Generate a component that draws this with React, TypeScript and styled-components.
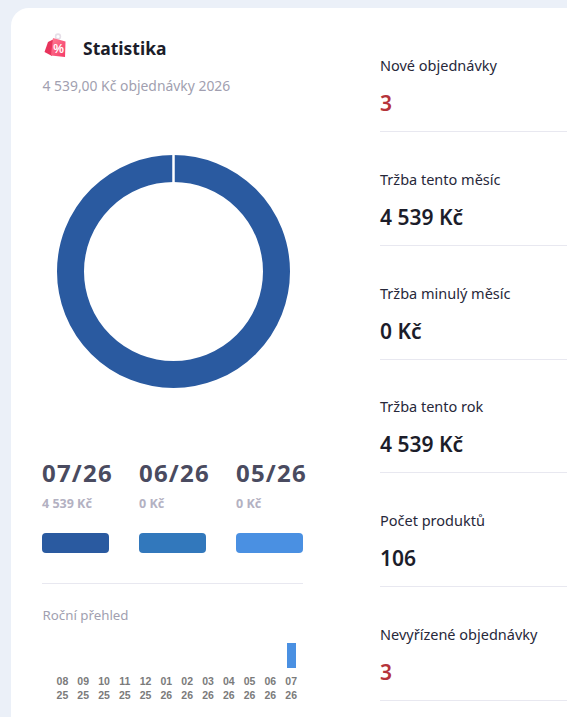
import styled, { createGlobalStyle } from "styled-components";

const months = [
  ["08", "25"], ["09", "25"], ["10", "25"], ["11", "25"], ["12", "25"], ["01", "26"],
  ["02", "26"], ["03", "26"], ["04", "26"], ["05", "26"], ["06", "26"], ["07", "26"],
];

const legend = [
  { period: "07/26", amount: "4 539 Kč", color: "#2a5aa0" },
  { period: "06/26", amount: "0 Kč", color: "#3278bc" },
  { period: "05/26", amount: "0 Kč", color: "#4a90e2" },
];

const stats = [
  { label: "Nové objednávky", value: "3", alert: true },
  { label: "Tržba tento měsíc", value: "4 539 Kč" },
  { label: "Tržba minulý měsíc", value: "0 Kč" },
  { label: "Tržba tento rok", value: "4 539 Kč" },
  { label: "Počet produktů", value: "106" },
  { label: "Nevyřízené objednávky", value: "3", alert: true },
];

export default function App() {
  return (
    <>
      <GlobalStyle />
      <Card>
        <LeftColumn>
          <Header>
            <svg width="24" height="32" viewBox="0 0 24 32">
              <defs>
                <linearGradient id="bag" x1="0" y1="0" x2="1" y2="1">
                  <stop offset="0" stopColor="#ff7d95" />
                  <stop offset="1" stopColor="#f53a66" />
                </linearGradient>
              </defs>
              <circle cx="15" cy="4.5" r="2.4" fill="none" stroke="#e6dfe8" strokeWidth="1.6" />
              <path d="M5 10 L1.5 20 L9 24 L11 7 Z" fill="#e8345c" />
              <path d="M10 6 L22.5 9.5 L22 25 L8 23.5 Z" fill="url(#bag)" />
              <text x="15.5" y="21" fontSize="12" fontWeight="700" fill="#fff" textAnchor="middle" fontFamily="'Liberation Sans', sans-serif">%</text>
            </svg>
            <Title>Statistika</Title>
          </Header>
          <Subtitle>4 539,00 Kč objednávky 2026</Subtitle>
          <DonutWrap>
            <svg width="233" height="233" viewBox="0 0 233 233">
              <circle cx="116.5" cy="116.5" r="103" fill="none" stroke="#2a5aa0" strokeWidth="27" />
              <line x1="116.5" y1="0" x2="116.5" y2="30" stroke="#fff" strokeWidth="2.5" />
            </svg>
          </DonutWrap>
          <Legend>
            {legend.map((item) => (
              <LegendItem key={item.period}>
                <Period>{item.period}</Period>
                <Amount>{item.amount}</Amount>
                <Swatch $color={item.color} />
              </LegendItem>
            ))}
          </Legend>
          <Divider />
          <YearLabel>Roční přehled</YearLabel>
          <Chart>
            {months.map(([month, year], index) => (
              <ChartColumn key={month + year}>
                <BarSlot>{index === months.length - 1 && <Bar />}</BarSlot>
                <MonthLabel>
                  {month}
                  <br />
                  {year}
                </MonthLabel>
              </ChartColumn>
            ))}
          </Chart>
        </LeftColumn>
        <RightColumn>
          {stats.map((stat) => (
            <StatRow key={stat.label}>
              <StatLabel>{stat.label}</StatLabel>
              <StatValue $alert={stat.alert}>{stat.value}</StatValue>
            </StatRow>
          ))}
        </RightColumn>
      </Card>
    </>
  );
}

const GlobalStyle = createGlobalStyle`
  html, body {
    margin: 0;
    height: 100%;
    overflow: hidden;
    background: #ebf0f8;
    font-family: "Noto Sans", sans-serif;
  }
  * {
    box-sizing: border-box;
  }
`;

const Card = styled.div`
  width: 700px;
  height: 800px;
  display: flex;
  margin: 8px 0 0 11px;
  padding: 24px 0 0 31px;
  background: #fff;
  border-radius: 18px;
`;

const LeftColumn = styled.div`
  display: flex;
  flex-direction: column;
  width: 261px;
  flex: none;
`;

const Header = styled.div`
  display: flex;
  align-items: center;
  gap: 16px;
  height: 32px;
  margin-left: 1px;
`;

const Title = styled.h2`
  margin: 0;
  font-size: 17.5px;
  font-weight: 700;
  color: #1c1d2a;
`;

const Subtitle = styled.p`
  margin: 12px 0 0 0.5px;
  font-size: 13.9px;
  line-height: 20px;
  color: #a19fb0;
`;

const DonutWrap = styled.div`
  display: flex;
  justify-content: center;
  margin-top: 59px;
  svg {
    display: block;
    margin-left: 1px;
  }
`;

const Legend = styled.div`
  display: flex;
  gap: 30px;
  margin-top: 70px;
`;

const LegendItem = styled.div`
  display: flex;
  flex-direction: column;
  width: 67px;
`;

const Period = styled.div`
  font-size: 24px;
  line-height: 30px;
  font-weight: 700;
  letter-spacing: 1.2px;
  color: #4a4b60;
  white-space: nowrap;
`;

const Amount = styled.div`
  margin-top: 8px;
  font-size: 12.5px;
  line-height: 16px;
  font-weight: 700;
  color: #b3b1c2;
  white-space: nowrap;
`;

const Swatch = styled.div<{ $color: string }>`
  height: 20px;
  margin-top: 21px;
  border-radius: 4px;
  background: ${(props) => props.$color};
`;

const Divider = styled.div`
  height: 1px;
  margin-top: 30px;
  background: #e8e8f0;
`;

const YearLabel = styled.div`
  margin-top: 21px;
  margin-left: 0.5px;
  font-size: 13.3px;
  line-height: 20px;
  color: #a19fb0;
`;

const Chart = styled.div`
  display: grid;
  grid-template-columns: repeat(12, 20.8px);
  margin: 18px 0 0 10px;
`;

const ChartColumn = styled.div`
  display: flex;
  flex-direction: column;
  align-items: center;
`;

const BarSlot = styled.div`
  display: flex;
  align-items: flex-end;
  height: 25px;
`;

const Bar = styled.div`
  width: 9px;
  height: 25px;
  background: #4a90e2;
`;

const MonthLabel = styled.div`
  margin-top: 6px;
  font-family: "Liberation Sans", Arial, sans-serif;
  font-size: 10.5px;
  line-height: 14px;
  font-weight: 700;
  text-align: center;
  color: #7b7b7b;
`;

const RightColumn = styled.div`
  display: flex;
  flex-direction: column;
  width: 260px;
  margin-left: 77px;
`;

const StatRow = styled.div`
  height: 113.8px;
  padding-top: 23px;
  position: relative;
  &::after {
    content: "";
    position: absolute;
    left: 0;
    right: 0;
    top: 99px;
    height: 1px;
    background: #e8e8f0;
  }
`;

const StatLabel = styled.div`
  font-size: 14.5px;
  line-height: 20px;
  color: #27283a;
`;

const StatValue = styled.div<{ $alert?: boolean }>`
  margin-top: 14px;
  font-size: 21px;
  line-height: 28px;
  font-weight: 600;
  color: ${(props) => (props.$alert ? "#b5333a" : "#1c1d2a")};
`;
